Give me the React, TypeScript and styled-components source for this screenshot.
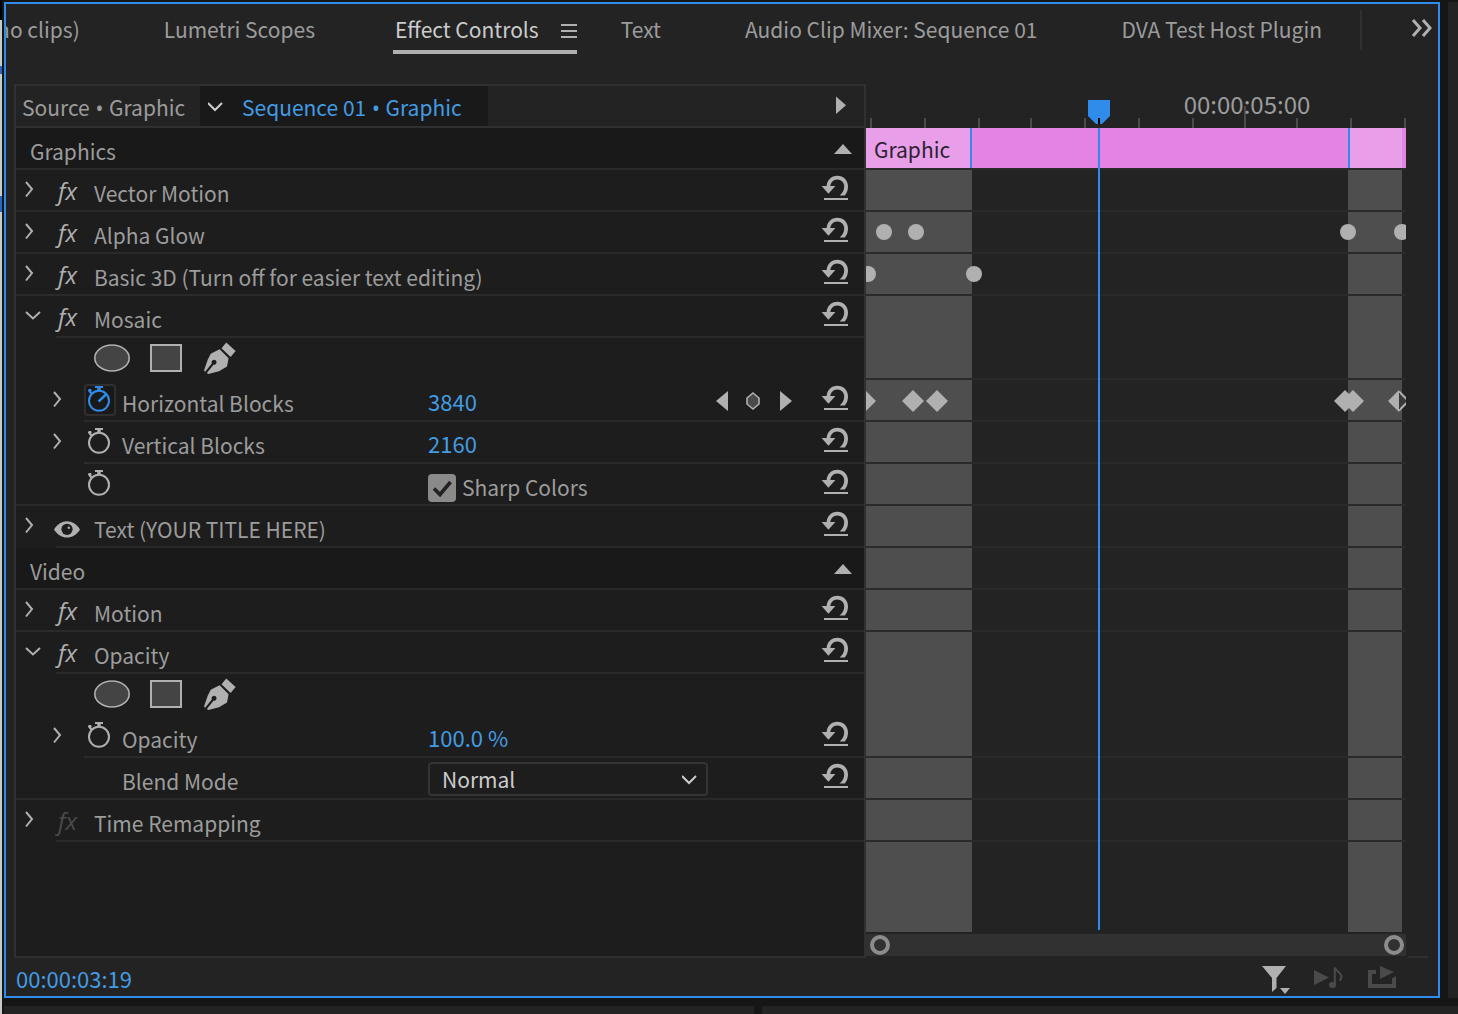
import React, { useState } from "react";
import styled, { createGlobalStyle, css } from "styled-components";

const color = {
  gutter: "#161616",
  panel: "#232323",
  list: "#1d1d1d",
  section: "#191919",
  line: "#2a2a2a",
  frame: "#303030",
  text: "#9c9c9c",
  bright: "#cccccc",
  icon: "#b0b0b0",
  dim: "#4a4a4a",
  blue: "#2f8ceb",
  value: "#429ce3",
  band: "#4e4e4e",
  clip: "#e583e5",
  clipLight: "#e99ee9",
};

const Global = createGlobalStyle`
  *, *::before, *::after { box-sizing: border-box; }
  body {
    margin: 0;
    background: ${color.gutter};
    color: ${color.text};
    font: 400 21px/40px "Noto Sans CJK SC", "Noto Sans", sans-serif;
  }
  button, input, select { font: inherit; color: inherit; }
  svg { display: block; flex: none; }
`;

const buttonReset = css`
  display: block;
  flex: none;
  padding: 0;
  border: 0;
  background: none;
  text-align: left;
  white-space: nowrap;
  cursor: pointer;
`;

/* ---------- window frame ---------- */

const Screen = styled.div`
  display: grid;
  grid-template-columns: 4px minmax(0, 1fr) 8px 10px;
  grid-template-rows: 2px minmax(0, 1fr) 8px 8px;
  min-height: 100vh;
`;

const Desktop = styled.div`
  grid-row: 1 / -1;
  width: 2px;
  background: linear-gradient(
    #000 20px, #c9c9c5 20px, #c9c9c5 66px, #2b66c0 66px, #2b66c0 74px,
    #c9c9c5 74px, #c9c9c5 196px, #2b66c0 196px, #2b66c0 212px, #c9c9c5 212px
  );
`;

const RightNeighbour = styled.div`
  grid-column: 4;
  grid-row: 2;
  background: ${color.panel};
`;

const LowerNeighbours = styled.div`
  grid-column: 2 / -1;
  grid-row: 4;
  display: grid;
  grid-template-columns: 750fr 696fr;
  gap: 8px;

  > div { background: ${color.panel}; }
`;

const Panel = styled.main`
  grid-column: 2;
  grid-row: 2;
  display: flex;
  flex-direction: column;
  min-width: 0;
  border: 2px solid ${color.blue};
  background: ${color.panel};
`;

/* ---------- tabs ---------- */

const TabBar = styled.header`
  display: flex;
  height: 80px;
`;

const Tabs = styled.nav`
  flex: 1;
  display: flex;
  justify-content: flex-end;
  align-items: flex-start;
  gap: 84px;
  min-width: 0;
  padding-right: 38px;
  overflow: hidden;
`;

const Tab = styled.button`
  ${buttonReset}
  height: 46px;
  padding-top: 4px;
  line-height: 42px;
`;

const ActiveTab = styled.div`
  flex: none;
  display: flex;
  align-items: center;
  gap: 22px;
  height: 50px;
  margin: 0 -40px 0 -6px;
  padding-left: 2px;
  border-bottom: 4px solid ${color.icon};
  color: ${color.bright};
`;

const IconButton = styled.button`
  ${buttonReset}
`;

const TabOverflow = styled.div`
  flex: none;
  display: flex;
  justify-content: flex-end;
  align-items: flex-start;
  width: 78px;
  height: 40px;
  margin-top: 6px;
  padding: 8px 5px 0 0;
  border-left: 2px solid ${color.frame};
`;

/* ---------- property list ---------- */

const Body = styled.div`
  flex: 1;
  display: grid;
  grid-template-columns: minmax(0, 71fr) minmax(0, 45fr) 32px;
  padding-left: 8px;
`;

const List = styled.section`
  border: 2px solid ${color.frame};
  background: ${color.list};
`;

const Breadcrumb = styled.div`
  display: flex;
  height: 42px;
  border-bottom: 2px solid ${color.frame};
  background: ${color.panel};
`;

const Bullet = styled.span`
  margin: 0 1px;
  font-family: "Noto Sans", sans-serif;
`;

const Crumb = styled.span`
  display: block;
  padding-top: 2px;
  line-height: 38px;
`;

const SourceButton = styled.button`
  ${buttonReset}
  width: 184px;
  padding-left: 6px;
`;

const SequenceButton = styled.button`
  ${buttonReset}
  display: flex;
  gap: 18px;
  padding: 0 26px 0 8px;
  background: ${color.section};
  color: ${color.value};
`;

const ShowTimeline = styled.button`
  ${buttonReset}
  margin: 0 16px 0 auto;
`;

const SectionRow = styled.div`
  display: flex;
  justify-content: space-between;
  height: 40px;
  padding: 0 12px 0 14px;
  background: ${color.section};
`;

const Title = styled.h2`
  margin: 0;
  padding-top: 3px;
  font: inherit;
`;

const Row = styled.div`
  display: grid;
  grid-template-columns: 412px minmax(0, 1fr) auto 28px;
  height: 40px;
  padding-right: 15px;
`;

const Rule = styled.div<{ $inset?: number; $hidden?: boolean }>`
  height: 2px;
  margin-left: ${(p) => p.$inset ?? 0}px;
  background: ${(p) => (p.$hidden ? "transparent" : color.line)};
`;

const Name = styled.div<{ $level: 0 | 1 }>`
  display: flex;
  padding-left: ${(p) => (p.$level ? 36 : 8)}px;
  white-space: nowrap;
`;

const TwistySlot = styled.div`
  flex: none;
  width: 32px;
`;

const BadgeSlot = styled.div`
  flex: none;
  width: 38px;
`;

const Label = styled.span`
  padding-top: 3px;
`;

const FxButton = styled.button<{ $off?: boolean }>`
  ${buttonReset}
  height: 40px;
  padding: 2px 0 0 2px;
  color: ${(p) => (p.$off ? color.dim : color.icon)};
  font: italic 400 24px/38px "Open Sans", "Noto Sans", sans-serif;
`;

const EyeButton = styled.button`
  ${buttonReset}
  margin-left: -2px;
`;

const StopwatchButton = styled.button<{ $on?: boolean }>`
  ${buttonReset}
  width: 32px;
  height: 32px;
  margin-top: 4px;
  border: 2px solid ${(p) => (p.$on ? "#2f2f2f" : "transparent")};
  border-radius: 4px;
  background: ${(p) => (p.$on ? color.section : "none")};
  color: ${(p) => (p.$on ? color.blue : color.icon)};
`;

const ValueInput = styled.input`
  width: 120px;
  height: 40px;
  padding: 2px 0 0;
  border: 0;
  background: none;
  color: ${color.value};
  font-size: 22px;
  line-height: 38px;
`;

const KeyNav = styled.div`
  display: flex;
  gap: 18px;
  padding: 10px 29px 0 0;
`;

const MaskTools = styled.div`
  display: flex;
  align-items: flex-start;
  gap: 20px;
  height: 40px;
  padding: 4px 0 0 78px;
`;

const CheckLabel = styled.label`
  display: flex;
  gap: 6px;
`;

const CheckBox = styled.span`
  display: grid;
  align-self: flex-start;
  margin-top: 10px;

  input {
    grid-area: 1 / 1;
    appearance: none;
    width: 28px;
    height: 28px;
    margin: 0;
    border-radius: 4px;
    background: #8a8a8a;
  }
  svg { grid-area: 1 / 1; pointer-events: none; }
  input:not(:checked) + svg { visibility: hidden; }
`;

const SelectBox = styled.div`
  display: grid;
  width: 280px;
  height: 34px;
  margin-top: 4px;

  select {
    grid-area: 1 / 1;
    appearance: none;
    padding: 0 40px 0 12px;
    border: 2px solid #343434;
    border-radius: 4px;
    background: ${color.list};
    color: ${color.bright};
    line-height: 30px;
  }
  svg { grid-area: 1 / 1; justify-self: end; margin-right: 10px; pointer-events: none; }
`;

/* ---------- timeline ---------- */

const Timeline = styled.section`
  display: flex;
  flex-direction: column;
  min-width: 0;
`;

const Ruler = styled.div`
  position: relative;
  height: 44px;
`;

const Tick = styled.i<{ $major?: boolean }>`
  position: absolute;
  bottom: 0;
  width: 2px;
  height: ${(p) => (p.$major ? 22 : 10)}px;
  background: #4b4b4b;
`;

const TimeLabel = styled.span`
  position: absolute;
  top: 0;
  display: flex;
  justify-content: center;
  width: 0;
  font-size: 24px;
  white-space: nowrap;
`;

const Handle = styled.div`
  position: absolute;
  top: 16px;
  margin-left: -10px;
`;

const Tracks = styled.div`
  position: relative;
  flex: 1;
  display: flex;
  flex-direction: column;
  overflow: hidden;
`;

const Clip = styled.div`
  position: relative;
  height: 40px;
  padding: 0 8px;
  background: ${color.clip};
  color: #2c2330;
  line-height: 42px;
`;

const ClipFade = styled.i<{ $edge: "left" | "right" }>`
  position: absolute;
  top: 0;
  bottom: 0;
  background: ${color.clipLight};
  border-${(p) => (p.$edge === "left" ? "right" : "left")}: 2px solid ${color.blue};
`;

const ClipName = styled.span`
  position: relative;
`;

const Band = styled.i`
  position: absolute;
  top: 42px;
  bottom: 0;
  background: ${color.band};
`;

const Track = styled.div<{ $rows: number }>`
  position: relative;
  height: ${(p) => p.$rows * 42}px;
  border-bottom: 2px solid ${color.line};
`;

const Keyframe = styled.div`
  position: absolute;
  top: 10px;
  margin-left: -11px;
`;

const Playhead = styled.i`
  position: absolute;
  top: 0;
  bottom: 2px;
  width: 2px;
  background: ${color.blue};
`;

const ZoomBar = styled.div`
  display: flex;
  justify-content: space-between;
  align-items: center;
  height: 22px;
  margin: 2px 0;
  padding: 0 2px 0 4px;
  background: #313131;
`;

const ZoomHandle = styled.button`
  ${buttonReset}
  width: 20px;
  height: 20px;
  border: 4px solid #8c8c8c;
  border-radius: 50%;
`;

const Corner = styled.div`
  align-self: end;
  width: 20px;
  height: 2px;
  margin-left: 2px;
  background: ${color.frame};
`;

/* ---------- footer ---------- */

const Footer = styled.footer`
  display: flex;
  justify-content: space-between;
  height: 38px;
  padding: 0 42px 0 10px;
`;

const Timecode = styled.button`
  ${buttonReset}
  color: ${color.value};
  font-size: 22px;
  line-height: 40px;
`;

const FooterTools = styled.div`
  display: flex;
  align-items: flex-start;
  gap: 24px;
  padding-top: 8px;
`;

/* ---------- icons ---------- */

const Twisty = ({ open, name }: { open?: boolean; name: string }) => (
  <IconButton aria-label={`Toggle ${name}`} aria-expanded={!!open}>
    <svg width="20" height="40" fill="none" stroke={color.icon} strokeWidth="2">
      <path d={open ? "M2 16l7 6.5 7-6.5" : "M2 12l6 7-6 7.5"} />
    </svg>
  </IconButton>
);

const ChevronDown = ({ height }: { height: number }) => (
  <svg width="16" height={height} viewBox="-8 -17 16 34" fill="none" stroke={color.bright} strokeWidth="2">
    <path d="M-8-3L-1 4l7-7" />
  </svg>
);

const Stopwatch = ({ on }: { on?: boolean }) => (
  <svg width="28" height="28" fill="none" stroke="currentColor" strokeWidth="2">
    <circle cx="13" cy="14.8" r="10" />
    <path d="M9 1h8" />
    <path d="M13 1v4" strokeWidth="3.4" />
    <path d="M2 4.5h3.6M4 3v3l2 2" />
    {on && <path d="M12.5 15.5l7.5-7" strokeWidth="2.4" />}
  </svg>
);

const Reset = ({ name }: { name: string }) => (
  <IconButton aria-label={`Reset ${name}`}>
    <svg width="28" height="40" fill="none">
      <path d="M.6 14h13.8l-7 7.800z" fill={color.icon} />
      <path
        d="M5.600 15C5.600 8.400 10.200 3.800 16.300 3.800 22.500 3.800 27 8.500 27 14.600c0 3.700-1.100 6.300-3.200 9h-5.200c3-2.600 4.600-5.300 4.600-9 0-4.100-2.900-7.100-7-7.100-4 0-6.900 3.200-6.900 7.500z"
        fill={color.icon}
      />
      <path d="M3 27h24" stroke={color.icon} strokeWidth="2" />
    </svg>
  </IconButton>
);

const Eye = () => (
  <svg width="26" height="40">
    <path d="M0 23.500C3.500 18 8 15.300 13 15.300S22.500 18 26 23.500C22.500 29 18 31.500 13 31.500S3.500 29 0 23.500z" fill={color.icon} />
    <circle cx="13" cy="23.300" r="5.600" fill={color.list} />
    <circle cx="14.800" cy="21.800" r="1.200" fill={color.icon} />
  </svg>
);

const MaskButtons = () => (
  <MaskTools>
    <IconButton aria-label="Create ellipse mask">
      <svg width="36" height="32">
        <ellipse cx="18" cy="16" rx="17.200" ry="13" fill="#444" stroke={color.icon} strokeWidth="1.600" />
      </svg>
    </IconButton>
    <IconButton aria-label="Create 4-point polygon mask">
      <svg width="32" height="32">
        <rect x="1" y="3" width="30" height="26" fill="#444" stroke={color.icon} strokeWidth="2" />
      </svg>
    </IconButton>
    <IconButton aria-label="Free draw bezier">
      <svg width="36" height="34" fill={color.icon}>
        <path d="M24.300.500L33.600 9l-5 6L19.500 6.300z" />
        <path d="M17.600 7.200l9 9-1.600 8.300-8 4.800-10.600 2.800-1.600-1 6.700-8.300a2.500 2.500 0 1 0-1.700-1.300L3.100 29.800 2 28.400l3.700-10.600 3-6z" />
      </svg>
    </IconButton>
  </MaskTools>
);

const KeyDiamond = ({ half }: { half?: boolean }) => (
  <svg width="22" height="22" fill={color.icon}>
    {half ? (
      <>
        <path d="M11 0v22L0 11z" />
        <path d="M11 1.500L20.500 11 11 20.500" fill="#393939" stroke={color.icon} strokeWidth="2" />
        <path d="M11.500 3v16" stroke="#393939" />
      </>
    ) : (
      <path d="M11 0l11 11-11 11L0 11z" />
    )}
  </svg>
);

const KeyDot = () => (
  <svg width="22" height="22" fill={color.icon}>
    <circle cx="11" cy="10" r="8" />
  </svg>
);

/* ---------- data ---------- */

// The visible span of the timeline is 540 units wide.
const SPAN = 540;
const at = (units: number) => `${(units / SPAN) * 100}%`;

const ticks = [4, 58, 112, 164, 218, 272, 326, 378, 430, 484, 538];
const MAJOR_TICK = 378;
const PLAYHEAD = 232;

type Key = { at: number; shape: "dot" | "diamond" | "half" };
type TrackData = { rows: number; keys?: Key[] };

const dots = (...units: number[]): Key[] => units.map((u) => ({ at: u, shape: "dot" }));

const tracks: TrackData[] = [
  { rows: 1 },
  { rows: 1, keys: dots(18, 50, 482, 536) },
  { rows: 1, keys: dots(2, 108) },
  { rows: 2 },
  {
    rows: 1,
    keys: [
      ...[-1, 47, 71, 479, 487].map((u): Key => ({ at: u, shape: "diamond" })),
      { at: 533, shape: "half" },
    ],
  },
  { rows: 1 },
  { rows: 1 },
  { rows: 1 },
  { rows: 1 },
  { rows: 1 },
  { rows: 3 },
  { rows: 1 },
  { rows: 1 },
];

/* ---------- rows ---------- */

const Section = ({ title }: { title: string }) => (
  <>
    <SectionRow>
      <Title>{title}</Title>
      <IconButton aria-label={`Collapse ${title}`}>
        <svg width="18" height="40" fill={color.icon}>
          <path d="M0 26l9-10 9 10z" />
        </svg>
      </IconButton>
    </SectionRow>
    <Rule />
  </>
);

type EffectProps = {
  name: string;
  open?: boolean;
  off?: boolean;
  eye?: boolean;
  reset?: boolean;
  inset?: number;
};

const Effect = ({ name, open, off, eye, reset = true, inset = 0 }: EffectProps) => (
  <>
    <Row>
      <Name $level={0}>
        <TwistySlot>
          <Twisty open={open} name={name} />
        </TwistySlot>
        <BadgeSlot>
          {eye ? (
            <EyeButton aria-label="Toggle visibility">
              <Eye />
            </EyeButton>
          ) : (
            <FxButton $off={off} aria-label={`Toggle effect ${name}`}>
              fx
            </FxButton>
          )}
        </BadgeSlot>
        <Label>{name}</Label>
      </Name>
      <span />
      <span />
      {reset && <Reset name={name} />}
    </Row>
    <Rule $inset={inset} />
  </>
);

type PropertyProps = {
  name?: string;
  id: string;
  twisty?: boolean;
  stopwatch?: "on" | "off";
  inset?: number;
  nav?: React.ReactNode;
  children: React.ReactNode;
};

const Property = ({ name, id, twisty, stopwatch, inset = 68, nav, children }: PropertyProps) => (
  <>
    <Row>
      <Name $level={1}>
        <TwistySlot>{twisty && <Twisty name={name ?? id} />}</TwistySlot>
        <BadgeSlot>
          {stopwatch && (
            <StopwatchButton $on={stopwatch === "on"} aria-label="Toggle animation">
              <Stopwatch on={stopwatch === "on"} />
            </StopwatchButton>
          )}
        </BadgeSlot>
        {name && (
          <Label as="label" htmlFor={id}>
            {name}
          </Label>
        )}
      </Name>
      <div>{children}</div>
      <div>{nav}</div>
      <Reset name={name ?? id} />
    </Row>
    <Rule $inset={inset} />
  </>
);

const KeyframeNav = () => (
  <KeyNav>
    <IconButton aria-label="Previous keyframe">
      <svg width="12" height="22" fill={color.icon}>
        <path d="M12 1v20L0 11z" />
      </svg>
    </IconButton>
    <IconButton aria-label="Add or remove keyframe">
      <svg width="14" height="22" fill="#4a4a4a" stroke={color.icon} strokeWidth="1.600">
        <path d="M7 3l6 5v6l-6 5-6-5V8z" />
      </svg>
    </IconButton>
    <IconButton aria-label="Next keyframe">
      <svg width="14" height="22" fill={color.icon}>
        <path d="M2 1v20l12-10z" />
      </svg>
    </IconButton>
  </KeyNav>
);

export default function App() {
  const [horizontal, setHorizontal] = useState("3840");
  const [vertical, setVertical] = useState("2160");
  const [opacity, setOpacity] = useState("100.0 %");
  const [sharp, setSharp] = useState(true);

  return (
    <Screen>
      <Global />
      <Desktop />
      <Panel>
        <TabBar>
          <Tabs>
            <Tab>(no clips)</Tab>
            <Tab>Lumetri Scopes</Tab>
            <ActiveTab>
              <Tab>Effect Controls</Tab>
              <IconButton aria-label="Panel menu">
                <svg width="16" height="22" stroke={color.icon} strokeWidth="2">
                  <path d="M0 9h16M0 15h16M0 21h16" />
                </svg>
              </IconButton>
            </ActiveTab>
            <Tab>Text</Tab>
            <Tab>Audio Clip Mixer: Sequence 01</Tab>
            <Tab>DVA Test Host Plugin</Tab>
          </Tabs>
          <TabOverflow>
            <IconButton aria-label="More panels">
              <svg width="22" height="20" fill="none" stroke={color.icon} strokeWidth="3">
                <path d="M2 2l7 8-7 8M12 2l7 8-7 8" />
              </svg>
            </IconButton>
          </TabOverflow>
        </TabBar>

        <Body>
          <List>
            <Breadcrumb>
              <SourceButton>
                <Crumb>
                  Source <Bullet>•</Bullet> Graphic
                </Crumb>
              </SourceButton>
              <SequenceButton>
                <ChevronDown height={40} />
                <Crumb>
                  Sequence 01 <Bullet>•</Bullet> Graphic
                </Crumb>
              </SequenceButton>
              <ShowTimeline aria-label="Hide timeline view">
                <svg width="12" height="40" fill={color.icon}>
                  <path d="M0 10.500v17.500l10-8.700z" />
                </svg>
              </ShowTimeline>
            </Breadcrumb>

            <Section title="Graphics" />
            <Effect name="Vector Motion" />
            <Effect name="Alpha Glow" />
            <Effect name="Basic 3D (Turn off for easier text editing)" />
            <Effect name="Mosaic" open inset={40} />
            <MaskButtons />
            <Rule $hidden />
            <Property name="Horizontal Blocks" id="horizontal" twisty stopwatch="on" nav={<KeyframeNav />}>
              <ValueInput id="horizontal" value={horizontal} onChange={(e) => setHorizontal(e.target.value)} />
            </Property>
            <Property name="Vertical Blocks" id="vertical" twisty stopwatch="off">
              <ValueInput id="vertical" value={vertical} onChange={(e) => setVertical(e.target.value)} />
            </Property>
            <Property id="sharp" stopwatch="off" inset={0}>
              <CheckLabel>
                <CheckBox>
                  <input type="checkbox" checked={sharp} onChange={(e) => setSharp(e.target.checked)} />
                  <svg width="28" height="28" fill="none" stroke="#222" strokeWidth="3.600">
                    <path d="M6 14.500l6 6L22.500 8" />
                  </svg>
                </CheckBox>
                <Label>Sharp Colors</Label>
              </CheckLabel>
            </Property>
            <Effect name="Text (YOUR TITLE HERE)" eye inset={40} />

            <Section title="Video" />
            <Effect name="Motion" />
            <Effect name="Opacity" open inset={40} />
            <MaskButtons />
            <Rule $hidden />
            <Property name="Opacity" id="opacity" twisty stopwatch="off">
              <ValueInput id="opacity" value={opacity} onChange={(e) => setOpacity(e.target.value)} />
            </Property>
            <Property name="Blend Mode" id="blend" inset={0}>
              <SelectBox>
                <select id="blend" defaultValue="Normal">
                  <option>Normal</option>
                </select>
                <ChevronDown height={34} />
              </SelectBox>
            </Property>
            <Effect name="Time Remapping" off reset={false} inset={40} />
          </List>

          <Timeline>
            <Ruler>
              {ticks.map((t) => (
                <Tick key={t} $major={t === MAJOR_TICK} style={{ left: at(t) }} />
              ))}
              <TimeLabel style={{ left: at(MAJOR_TICK + 3) }}>00:00:05:00</TimeLabel>
              <Handle style={{ left: at(PLAYHEAD) }}>
                <svg width="22" height="24">
                  <path d="M0 0h22v16l-8 8H8l-8-8z" fill={color.blue} />
                  <path d="M11 18v6" stroke="#000" strokeWidth="2" />
                </svg>
              </Handle>
            </Ruler>
            <Tracks>
              <Band style={{ left: 0, width: at(106) }} />
              <Band style={{ left: at(482), width: at(54) }} />
              <Clip>
                <ClipFade $edge="left" style={{ left: 0, width: at(106) }} />
                <ClipFade $edge="right" style={{ left: at(482), width: at(54) }} />
                <ClipName>Graphic</ClipName>
              </Clip>
              <Rule />
              {tracks.map((track, i) => (
                <Track key={i} $rows={track.rows}>
                  {track.keys?.map((k) => (
                    <Keyframe key={k.at} style={{ left: at(k.at) }}>
                      {k.shape === "dot" ? <KeyDot /> : <KeyDiamond half={k.shape === "half"} />}
                    </Keyframe>
                  ))}
                </Track>
              ))}
              <Playhead style={{ left: at(PLAYHEAD) }} />
            </Tracks>
            <ZoomBar>
              <ZoomHandle aria-label="Zoom start" />
              <ZoomHandle aria-label="Zoom end" />
            </ZoomBar>
          </Timeline>
          <Corner />
        </Body>

        <Footer>
          <Timecode>00:00:03:19</Timecode>
          <FooterTools>
            <IconButton aria-label="Filter properties">
              <svg width="28" height="28" fill={color.icon}>
                <path d="M0 0h24l-9.500 12v10L10 26V12z" />
                <path d="M18 22h10l-5 6z" />
              </svg>
            </IconButton>
            <IconButton aria-label="Play only audio">
              <svg width="30" height="24" fill={color.dim}>
                <path d="M0 4l15 7.500L0 19z" />
                <ellipse cx="18.500" cy="19" rx="3.600" ry="3" />
                <path d="M20.800 19V1.500c1 4 7 5 6.600 9.500-.2 1.500-1 3-2 3.600" fill="none" stroke={color.dim} strokeWidth="2" />
              </svg>
            </IconButton>
            <IconButton aria-label="Toggle loop">
              <svg width="28" height="24" fill={color.dim}>
                <path d="M0 4h8v4H4v10h20v-5.500l4-2.500v12H0z" />
                <path d="M12 0l14 6-14 7z" />
              </svg>
            </IconButton>
          </FooterTools>
        </Footer>
      </Panel>
      <RightNeighbour />
      <LowerNeighbours>
        <div />
        <div />
      </LowerNeighbours>
    </Screen>
  );
}
